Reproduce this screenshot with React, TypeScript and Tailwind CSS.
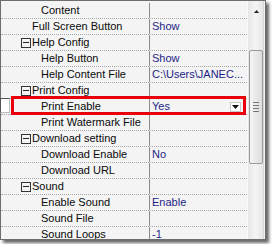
import React from "react";

type Row = { label: string; value?: string; group?: boolean; indent: number };

const rows: Row[] = [
  { label: "Content", indent: 40 },
  { label: "Full Screen Button", value: "Show", indent: 31 },
  { label: "Help Config", group: true, indent: 20 },
  { label: "Help Button", value: "Show", indent: 40 },
  { label: "Help Content File", value: "C:\\Users\\JANEC...", indent: 40 },
  { label: "Print Config", group: true, indent: 20 },
  { label: "Print Enable", value: "Yes", indent: 40 },
  { label: "Print Watermark File", indent: 40 },
  { label: "Download setting", group: true, indent: 20 },
  { label: "Download Enable", value: "No", indent: 40 },
  { label: "Download URL", indent: 40 },
  { label: "Sound", group: true, indent: 20 },
  { label: "Enable Sound", value: "Enable", indent: 40 },
  { label: "Sound File", indent: 40 },
  { label: "Sound Loops", value: "-1", indent: 40 },
];

const MinusBox = () => (
  <span className="flex items-center justify-center w-[10px] h-[10px] border border-[#333] mr-[1px] shrink-0">
    <span className="block w-[6px] h-[1px] bg-[#222]" />
  </span>
);

const GridRow = ({ row }: { row: Row }) => (
  <div className="flex h-[16px] shrink-0 border-b border-dotted border-[#a8a8a8]">
    <div className="w-[149px] shrink-0 flex items-center border-r border-[#8a8a8a]" style={{ paddingLeft: row.indent }}>
      {row.group && <MinusBox />}
      <span className="text-[#0a0a0a] whitespace-nowrap">{row.label}</span>
    </div>
    <div className="flex-1 flex items-center pl-[2px] text-[#1e1e86] whitespace-nowrap overflow-hidden">
      {row.value}
    </div>
  </div>
);

export default function App() {
  return (
    <div className="w-[273px] h-[244px] bg-white overflow-hidden" style={{ fontFamily: '"Liberation Sans", Arial, sans-serif' }}>
      <div className="relative w-[266px] h-[240px] border border-[#6e6e6e] bg-[#f4f4f4] flex shadow-[3px_3px_3px_rgba(0,0,0,0.6)] text-[11px] leading-none">
        <div className="w-[246px] flex flex-col pt-[2px] overflow-hidden">
          {rows.map((r) => (
            <GridRow key={r.label} row={r} />
          ))}
        </div>

        {/* scrollbar */}
        <div className="relative w-[17px] border-l border-[#fafafa] bg-gradient-to-r from-[#e6e6e6] via-[#f4f4f4] to-[#e6e6e6] border-r border-r-[#d6d6d6]">
          <svg className="absolute left-[6px] top-[9px]" width="5" height="3" viewBox="0 0 5 3">
            <path d="M2.5 0 L5 3 L0 3 Z" fill="#222" />
          </svg>
          <div className="absolute left-[1px] top-[49px] w-[14px] h-[114px] rounded-[2px] border border-[#9a9a9a] bg-gradient-to-r from-[#f6f6f6] to-[#dcdcdc] flex flex-col items-center justify-center gap-[2px]">
            <span className="block w-[6px] h-[1px] bg-[#777]" />
            <span className="block w-[6px] h-[1px] bg-[#777]" />
            <span className="block w-[6px] h-[1px] bg-[#777]" />
            <span className="block w-[6px] h-[1px] bg-[#777]" />
          </div>
        </div>

        {/* annotation: highlighted row */}
        <div className="absolute left-[-1px] top-[97px] w-[10px] h-[15px] bg-white border border-[#555] border-r-[#bbb] border-b-[#bbb]" />
        <div className="absolute left-[10px] top-[95px] w-[235px] h-[19px] border-[3px] border-[#e8000b]">
          <div className="absolute right-[2px] top-[3px] w-[11px] h-[10px] bg-white border border-[#c8c8c8] flex items-center justify-center">
            <svg width="7" height="4" viewBox="0 0 7 4">
              <path d="M0 0 L7 0 L3.5 4 Z" fill="#111" />
            </svg>
          </div>
        </div>
      </div>
    </div>
  );
}
